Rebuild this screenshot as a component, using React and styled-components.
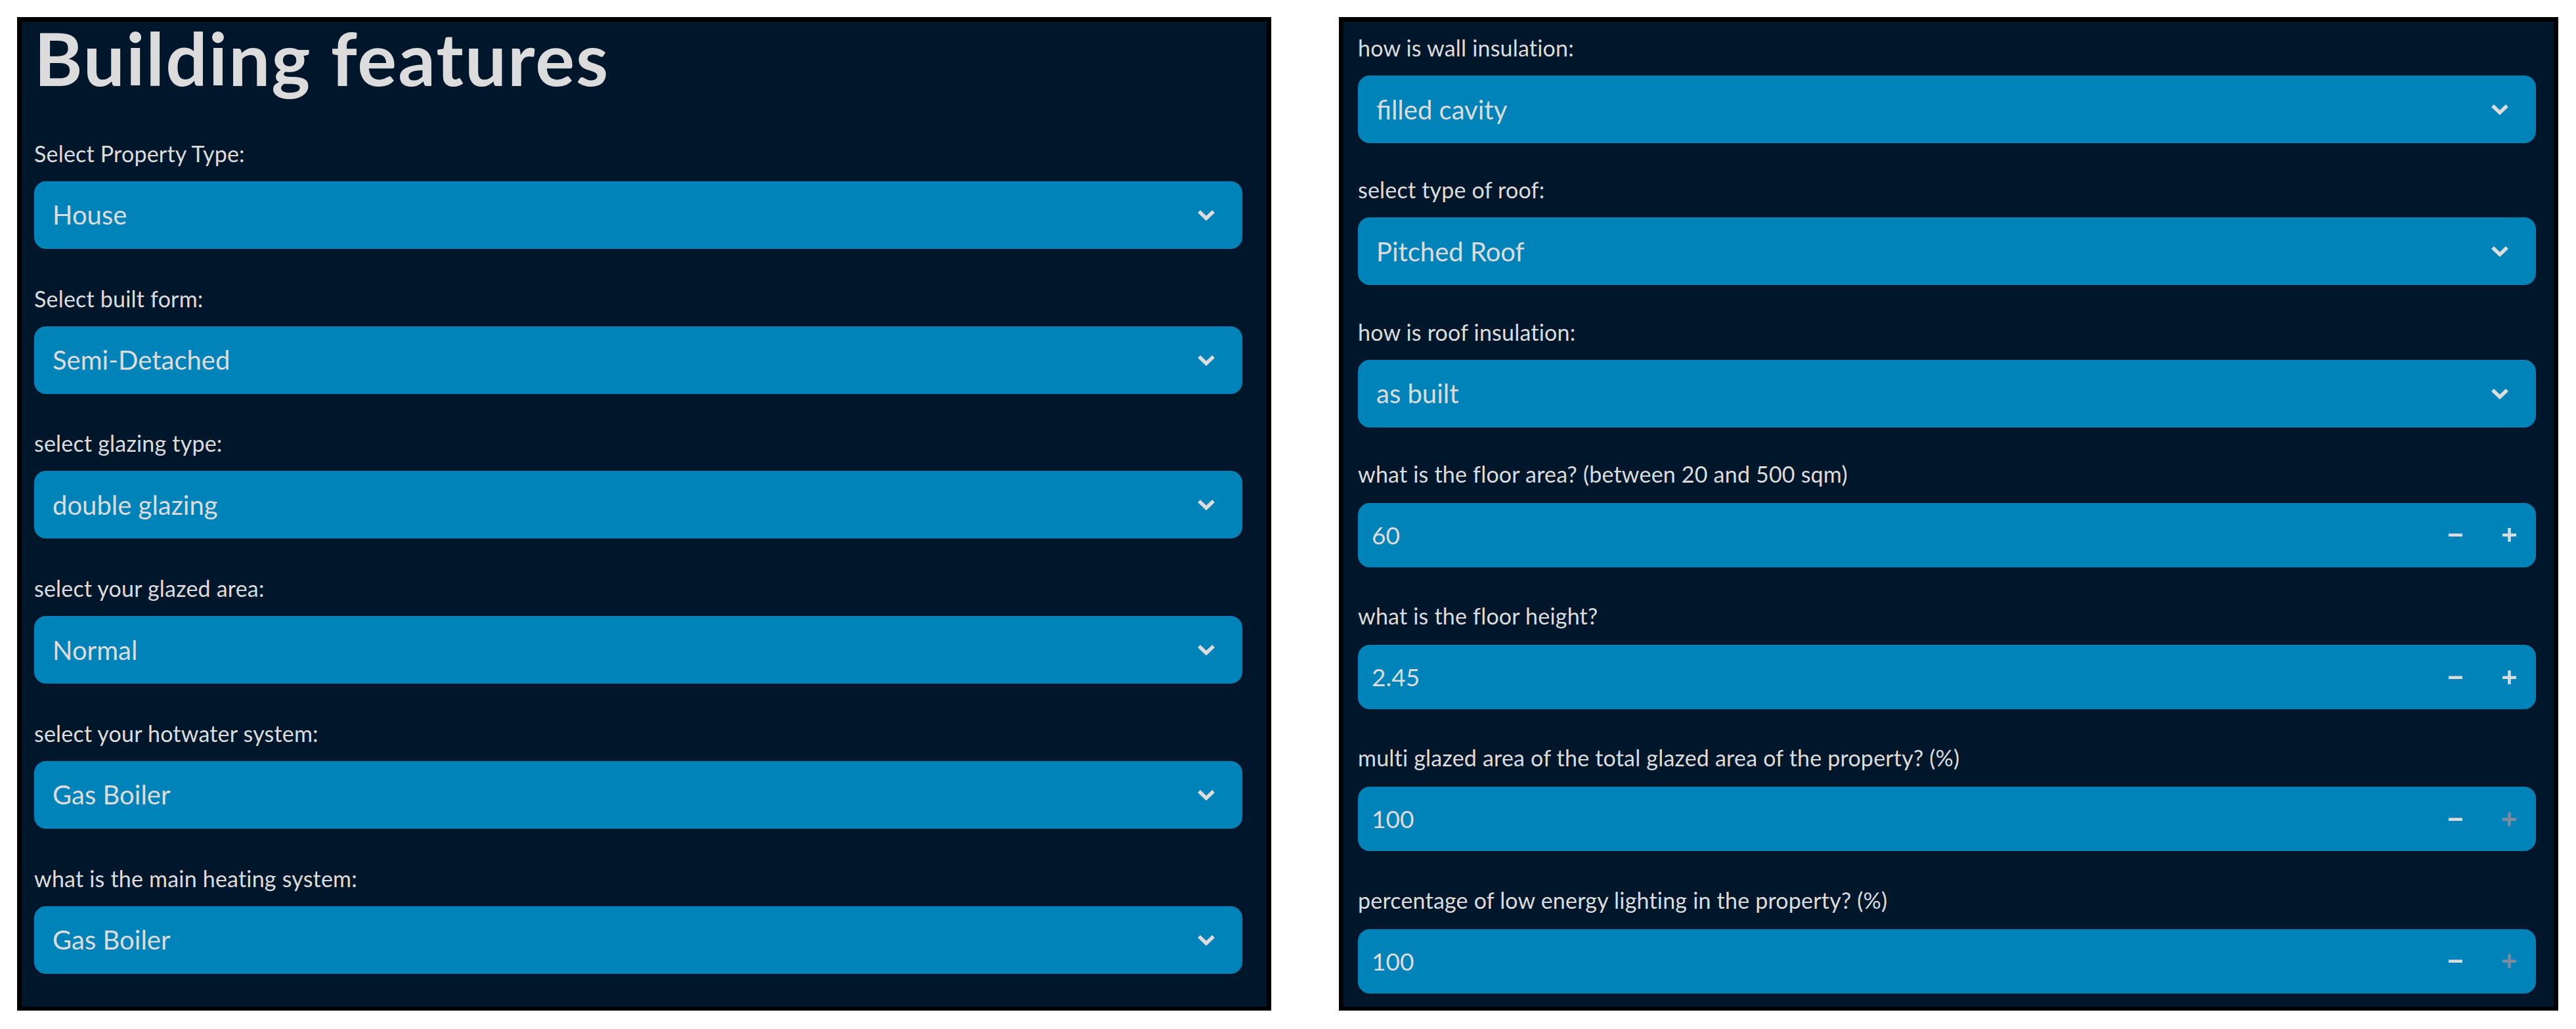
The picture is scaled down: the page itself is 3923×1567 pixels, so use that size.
import React from 'react';
import styled, { createGlobalStyle } from 'styled-components';

const GlobalStyle = createGlobalStyle`
  body {
    margin: 0;
    background: #ffffff;
    font-family: Lato, "Liberation Sans", sans-serif;
  }
`;

const Page = styled.div`
  display: flex;
  align-items: flex-start;
  gap: 103px;
  padding: 26px 0 0 26px;
`;

const Panel = styled.section`
  box-sizing: border-box;
  width: ${(p) => p.$width}px;
  height: 1513px;
  background: #00172b;
  border: 7px solid #000;
  border-bottom-width: 6px;
  padding: ${(p) => p.$padding};
  display: flex;
  flex-direction: column;
  gap: ${(p) => p.$gap}px;
`;

const Title = styled.h1`
  margin: 0 0 18px;
  font-size: 112px;
  line-height: 105px;
  font-weight: 700;
  color: #dcdcdc;
  letter-spacing: 2px;
`;

const Field = styled.div`
  display: flex;
  flex-direction: column;
  height: 165px;
  flex-shrink: 0;
`;

const Label = styled.label`
  font-size: 34px;
  line-height: 40px;
  letter-spacing: 0.2px;
  color: #dcdcdc;
  margin-bottom: ${(p) => p.$gap}px;
  white-space: nowrap;
`;

const SelectBox = styled.div`
  box-sizing: border-box;
  height: 104px;
  display: flex;
  align-items: center;
  justify-content: space-between;
  padding: 0 41px 0 28px;
  background: #0083b8;
  border-radius: 18px;
  color: #dcdcdc;
  font-size: 40px;
  line-height: 1.2;
`;

const NumberBox = styled.div`
  box-sizing: border-box;
  height: 98px;
  display: flex;
  align-items: center;
  padding-left: 21px;
  background: #0083b8;
  border-radius: 18px;
  color: #dcdcdc;
  font-size: 37px;
  line-height: 1.2;
`;

const Value = styled.span`
  flex: 1;
`;

const StepButton = styled.span`
  width: 82px;
  height: 100%;
  display: flex;
  align-items: center;
  justify-content: center;
  color: ${(p) => (p.$disabled ? '#838a9c' : '#dcdcdc')};
`;

const Chevron = () => (
  <svg width="28" height="17" viewBox="0 0 28 17">
    <polyline points="3,3 14,13.5 25,3" fill="none" stroke="#dcdcdc" strokeWidth="5.5" strokeLinejoin="miter" />
  </svg>
);

const Minus = () => (
  <svg width="21" height="21" viewBox="0 0 21 21">
    <rect x="0" y="8.5" width="21" height="4.5" fill="currentColor" />
  </svg>
);

const Plus = () => (
  <svg width="21" height="21" viewBox="0 0 21 21">
    <rect x="0" y="8.5" width="21" height="4.5" fill="currentColor" />
    <rect x="8.25" y="0" width="4.5" height="21" fill="currentColor" />
  </svg>
);

const SelectField = ({ label, value }) => (
  <Field>
    <Label $gap={22}>{label}</Label>
    <SelectBox>
      <span>{value}</span>
      <Chevron />
    </SelectBox>
  </Field>
);

const NumberField = ({ label, value, atMax }) => (
  <Field>
    <Label $gap={24}>{label}</Label>
    <NumberBox>
      <Value>{value}</Value>
      <StepButton><Minus /></StepButton>
      <StepButton $disabled={atMax}><Plus /></StepButton>
    </NumberBox>
  </Field>
);

const buildingSelects = [
  ['Select Property Type:', 'House'],
  ['Select built form:', 'Semi-Detached'],
  ['select glazing type:', 'double glazing'],
  ['select your glazed area:', 'Normal'],
  ['select your hotwater system:', 'Gas Boiler'],
  ['what is the main heating system:', 'Gas Boiler'],
];

const fabricSelects = [
  ['how is wall insulation:', 'filled cavity'],
  ['select type of roof:', 'Pitched Roof'],
  ['how is roof insulation:', 'as built'],
];

const numbers = [
  ['what is the floor area? (between 20 and 500 sqm)', '60', false],
  ['what is the floor height?', '2.45', false],
  ['multi glazed area of the total glazed area of the property? (%)', '100', true],
  ['percentage of low energy lighting in the property? (%)', '100', true],
];

export default function App() {
  return (
    <>
      <GlobalStyle />
      <Page>
        <Panel $width={1910} $padding="2px 37px 0 19px" $gap={55.8}>
          <Title>Building features</Title>
          {buildingSelects.map(([label, value]) => (
            <SelectField key={label} label={label} value={value} />
          ))}
        </Panel>
        <Panel $width={1857} $padding="20px 27px 0 22px" $gap={51.3}>
          {fabricSelects.map(([label, value]) => (
            <SelectField key={label} label={label} value={value} />
          ))}
          {numbers.map(([label, value, atMax]) => (
            <NumberField key={label} label={label} value={value} atMax={atMax} />
          ))}
        </Panel>
      </Page>
    </>
  );
}
